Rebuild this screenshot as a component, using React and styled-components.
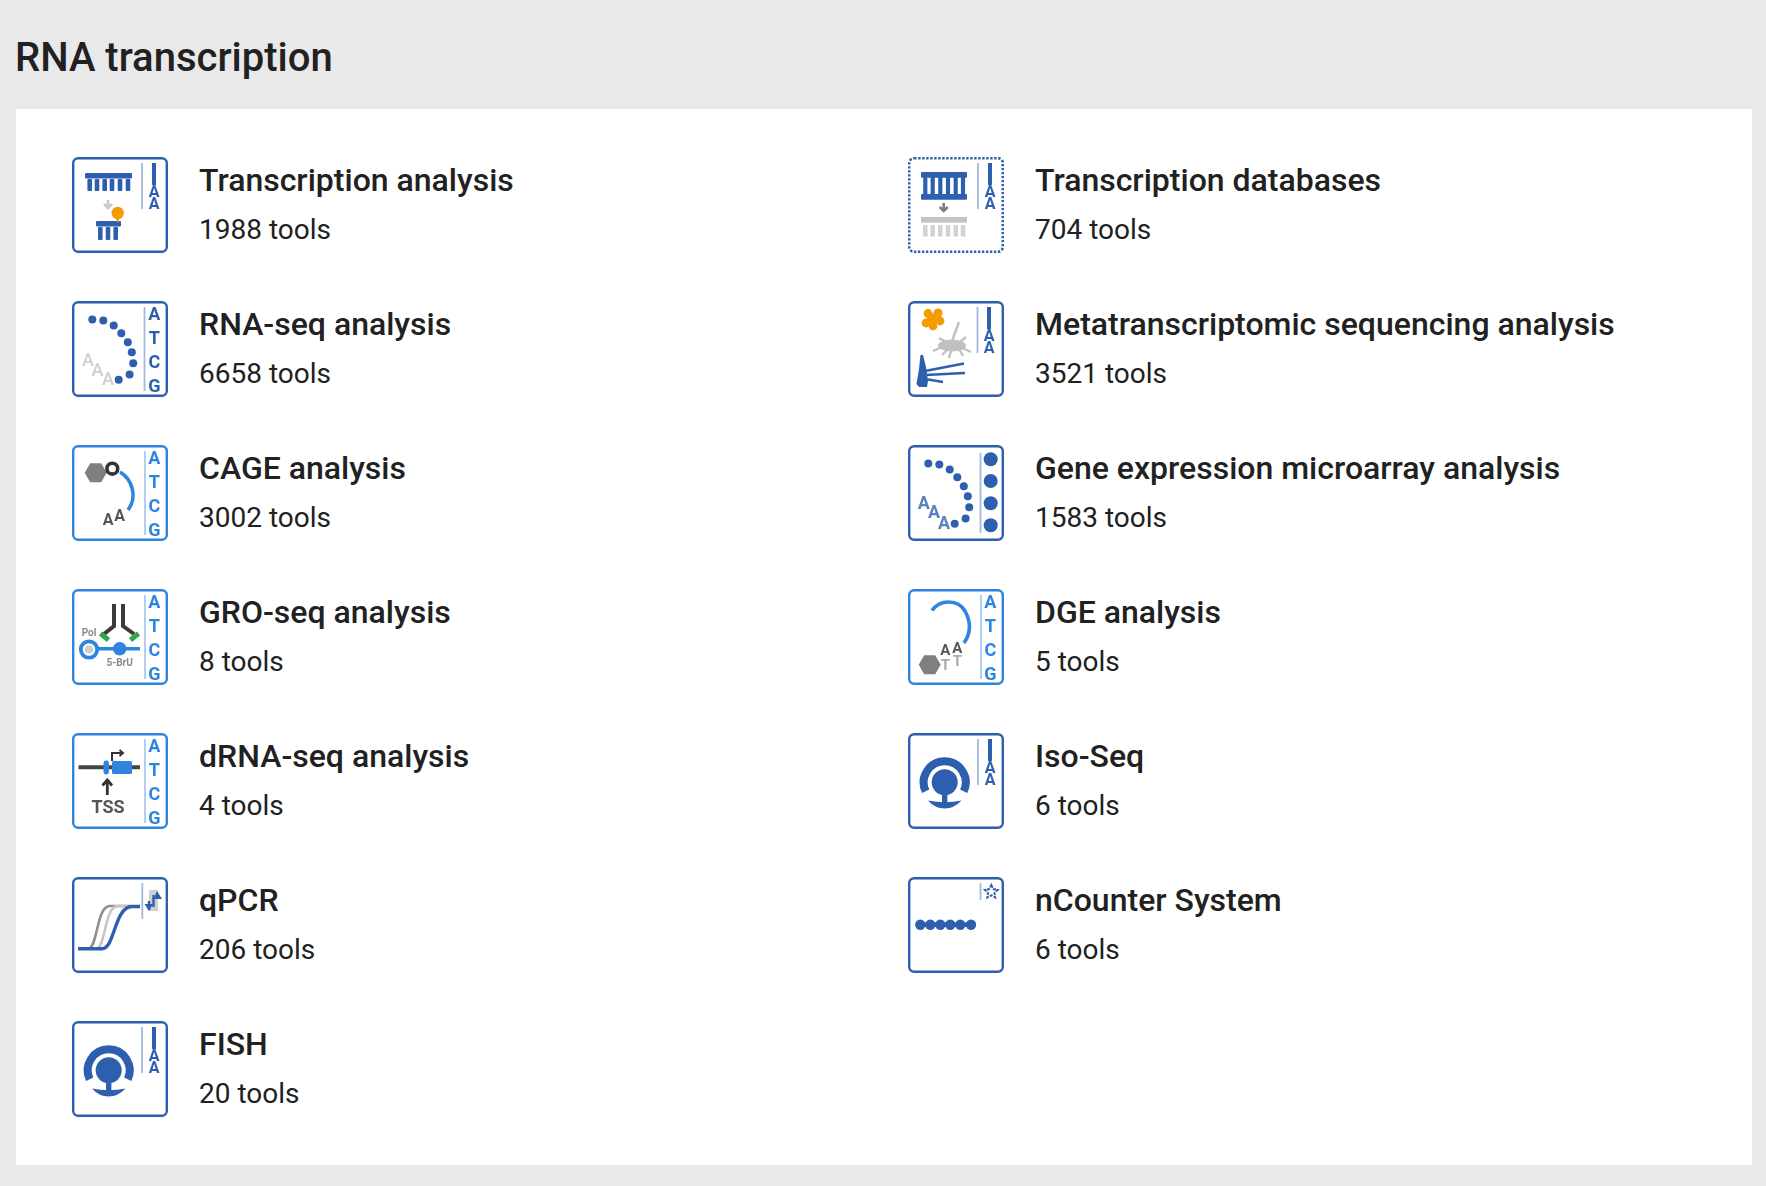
import React from "react"
import styled, { createGlobalStyle } from "styled-components"

const DARK = "#2e5fae"
const LIGHT = "#2f84de"
const DARK_SEP = "#a3b8dc"
const LIGHT_SEP = "#a5cbf3"

const GlobalStyle = createGlobalStyle`
  html, body {
    margin: 0;
    background: #e9e9e9;
  }
  body {
    font-family: Roboto, "Liberation Sans", sans-serif;
    color: #212121;
  }
`

const Letter = ({ x, y, size = 18, fill, weight = 700, children }) => (
  <text x={x} y={y} fontSize={size} fontWeight={weight} fill={fill} textAnchor="middle" fontFamily="Roboto, sans-serif">
    {children}
  </text>
)

// frame + side strip shared by every icon
const Frame = ({ color = DARK, dotted, children }) => (
  <IconSvg viewBox="0 0 96 96">
    <rect
      x="1.2"
      y="1.2"
      width="93.6"
      height="93.6"
      rx="5"
      fill="#fff"
      stroke={color}
      strokeWidth={dotted ? 2.6 : 2.4}
      strokeDasharray={dotted ? "2.4 1.6" : undefined}
    />
    {children}
  </IconSvg>
)

const Atcg = ({ x = 73, color = LIGHT, sep = LIGHT_SEP }) => (
  <>
    <line x1={x} y1="6" x2={x} y2="90" stroke={sep} strokeWidth="1.8" />
    {["A", "T", "C", "G"].map((l, i) => (
      <Letter key={l} x="82.4" y={18.5 + i * 24.2} fill={color}>
        {l}
      </Letter>
    ))}
  </>
)

const PolyA = ({ x = 70, strip = 82 }) => (
  <>
    <line x1={x} y1="6" x2={x} y2="52" stroke={DARK_SEP} strokeWidth="1.8" />
    <line x1={strip} y1="6" x2={strip} y2="28" stroke={DARK} strokeWidth="4" />
    <Letter x={strip} y="39.5" size={16} fill={DARK}>A</Letter>
    <Letter x={strip} y="52" size={16} fill={DARK}>A</Letter>
  </>
)

const Comb = ({ xs, y, h, w = 4.6, color = DARK }) =>
  xs.map((x) => <rect key={x} x={x - w / 2} y={y} width={w} height={h} rx="1" fill={color} />)

const DotArc = () =>
  [
    [20.3, 18.5],
    [31.3, 19.5],
    [41.7, 24.5],
    [49.3, 32.2],
    [55.8, 41.2],
    [59.8, 51.2],
    [61.2, 62.2],
    [57.6, 73.5],
    [46.7, 78.7],
  ].map(([cx, cy]) => <circle key={cx} cx={cx} cy={cy} r="4" fill={DARK} />)

const Hexagon = ({ cx, cy, r = 11 }) => {
  const pts = [0, 60, 120, 180, 240, 300]
    .map((a) => {
      const t = (a * Math.PI) / 180
      return `${cx + r * Math.cos(t)},${cy + r * Math.sin(t)}`
    })
    .join(" ")
  return <polygon points={pts} fill="#7f7f7f" />
}

const ArrowDown = ({ x, y1, y2, color }) => (
  <g stroke={color} fill="none" strokeWidth="2.6">
    <line x1={x} y1={y1} x2={x} y2={y2} />
    <path d={`M${x - 4} ${y2 - 4} L${x} ${y2} L${x + 4} ${y2 - 4}`} />
  </g>
)

const TranscriptionIcon = () => (
  <Frame>
    <rect x="13" y="16" width="47" height="5.6" rx="1" fill={DARK} />
    <Comb xs={[17.7, 25, 32.7, 40, 48, 56]} y={22} h={12} />
    <ArrowDown x={36} y1={43} y2={51} color="#c8c8c8" />
    <rect x="24" y="64" width="25" height="5.4" rx="1" fill={DARK} />
    <Comb xs={[28.3, 36, 43.7]} y={70} h={13} />
    <circle cx="45.7" cy="56" r="6.2" fill="#f39c00" />
    <line x1="45.7" y1="58" x2="45.7" y2="65" stroke="#f39c00" strokeWidth="2.4" />
    <PolyA />
  </Frame>
)

const DatabasesIcon = () => (
  <Frame dotted>
    <rect x="13" y="15" width="46" height="5.8" rx="1" fill={DARK} />
    <Comb xs={[17.3, 24.7, 32.3, 40, 47.7, 55]} y={20} h={18} w={4.2} />
    <rect x="13" y="37" width="46" height="5.8" rx="1" fill={DARK} />
    <ArrowDown x={35.7} y1={46} y2={54} color="#7d7d7d" />
    <rect x="13" y="60" width="46" height="5.6" fill="#c4c4c4" />
    <Comb xs={[17.3, 24.7, 32.3, 40, 47.7, 55]} y={68} h={11.5} color="#d2d2d2" />
    <PolyA />
  </Frame>
)

const RnaSeqIcon = () => (
  <Frame>
    <DotArc />
    <Letter x="16" y="64.5" size={18} weight={500} fill="#cfcfcf">A</Letter>
    <Letter x="25.5" y="75" size={18} weight={500} fill="#cfcfcf">A</Letter>
    <Letter x="36" y="83.5" size={18} weight={500} fill="#cfcfcf">A</Letter>
    <Atcg x={72.5} color={DARK} sep={DARK_SEP} />
  </Frame>
)

const MetaIcon = () => (
  <Frame>
    <g fill="#f39c00">
      <circle cx="20" cy="12.5" r="4.4" />
      <circle cx="30" cy="12" r="4.6" />
      <circle cx="32" cy="20" r="4.4" />
      <circle cx="18" cy="22" r="4.4" />
      <circle cx="25" cy="25" r="4.4" />
      <circle cx="24" cy="18" r="5.4" />
    </g>
    <g stroke="#c0c0c0" strokeWidth="2.4" fill="none">
      <path d="M51 21 L44 40" />
      <path d="M25 50 L36 45 M31 37 L40 42 M34 54 L40 48 M41 57 L43 50 M55 55 L51 48 M63 51 L52 46 M58 36 L52 41" />
    </g>
    <ellipse cx="44" cy="44.5" rx="14" ry="6" fill="#c0c0c0" />
    <path d="M12.5 54 L15 54 L18 66 L20 80 L19 86 L11 86 L8.5 83 L11 68 Z" fill={DARK} />
    <path d="M17 70 L56 62.5 M17 74 L57 72 M17 78 L35 81" stroke={DARK} strokeWidth="2.6" fill="none" />
    <PolyA x={69.5} strip={81} />
  </Frame>
)

const CageIcon = () => (
  <Frame color={LIGHT}>
    <Hexagon cx={23.7} cy={27.7} />
    <circle cx="40.3" cy="23.7" r="5.4" fill="#fff" stroke="#333" strokeWidth="3.6" />
    <path d="M48 27 C60 34 66 52 56 65" fill="none" stroke={LIGHT} strokeWidth="3.6" />
    <Letter x="36" y="80" size={16} weight={700} fill="#555">A</Letter>
    <Letter x="47.5" y="76" size={16} weight={700} fill="#555">A</Letter>
    <Atcg />
  </Frame>
)

const MicroarrayIcon = () => (
  <Frame>
    <DotArc />
    <Letter x="15.7" y="64" size={18} weight={700} fill="#5a80bf">A</Letter>
    <Letter x="26" y="73" size={18} weight={700} fill="#5a80bf">A</Letter>
    <Letter x="36" y="84" size={18} weight={700} fill="#5a80bf">A</Letter>
    <line x1="72.5" y1="8" x2="72.5" y2="88" stroke={DARK_SEP} strokeWidth="1.8" />
    {[14.3, 36, 58.3, 80.3].map((cy) => (
      <circle key={cy} cx="82.7" cy={cy} r="7" fill={DARK} />
    ))}
  </Frame>
)

const GroSeqIcon = () => (
  <Frame color={LIGHT}>
    <path d="M42 15 V37 L32 45 M51 15 V37 L62 45" fill="none" stroke="#3a3a3a" strokeWidth="4" />
    <path d="M28.5 44.5 L36.5 51 M58.5 51 L66.5 44.5" stroke="#2aa84a" strokeWidth="5" fill="none" />
    <Letter x="17" y="47" size={10} weight={700} fill="#888">Pol</Letter>
    <circle cx="17" cy="60.5" r="8.2" fill="#fff" stroke={LIGHT} strokeWidth="3.8" />
    <circle cx="17" cy="60.5" r="4" fill="#cfcfcf" />
    <line x1="26" y1="59.7" x2="68" y2="59.7" stroke={LIGHT} strokeWidth="3.4" />
    <circle cx="47.7" cy="59.7" r="6.8" fill={LIGHT} />
    <Letter x="47.7" y="77" size={10} weight={700} fill="#888">5-BrU</Letter>
    <Atcg />
  </Frame>
)

const DgeIcon = () => (
  <Frame color={LIGHT}>
    <path d="M24 21.5 C32 10 50 10 57 22 C63 33 63 44 56 54" fill="none" stroke={LIGHT} strokeWidth="3.6" />
    <Hexagon cx={21.7} cy={75.7} />
    <Letter x="37.3" y="66" size={15} fill="#555">A</Letter>
    <Letter x="49.3" y="64" size={15} fill="#555">A</Letter>
    <Letter x="37.3" y="81" size={15} fill="#aaa">T</Letter>
    <Letter x="49.3" y="77" size={15} fill="#aaa">T</Letter>
    <Atcg />
  </Frame>
)

const DrnaIcon = () => (
  <Frame color={LIGHT}>
    <line x1="6.5" y1="34.3" x2="68" y2="34.3" stroke="#444" strokeWidth="4" />
    <rect x="31.5" y="27.5" width="5.4" height="14" rx="2.4" fill={LIGHT} />
    <rect x="40" y="28" width="20" height="13" rx="1.5" fill={LIGHT} />
    <path d="M40 28 V20 H50 M47.5 17 L51 20 L47.5 23" fill="none" stroke="#333" strokeWidth="2" />
    <path d="M35.3 62 V48 M30.5 52.5 L35.3 47 L40 52.5" fill="none" stroke="#333" strokeWidth="2.8" />
    <Letter x="36" y="79.5" size={18} weight={700} fill="#555">TSS</Letter>
    <Atcg />
  </Frame>
)

const QpcrIcon = () => (
  <Frame>
    <path d="M10 71.7 H16 C26 71.7 24 29 38 29 H58" fill="none" stroke="#8f8f8f" strokeWidth="2.6" />
    <path d="M18 71.7 H24 C34 71.7 32 29 46 29 H60" fill="none" stroke="#c6c6c6" strokeWidth="2.6" />
    <rect x="77" y="13" width="9" height="21" fill="#cfcfcf" />
    <path d="M6 71.7 H30 C43 71.7 42 30 60 29.5 H68" fill="none" stroke={DARK} strokeWidth="3.4" />
    <line x1="70.3" y1="6" x2="70.3" y2="42" stroke={DARK_SEP} strokeWidth="1.8" />
    <path d="M77 24 V33 M81.5 30 V18" fill="none" stroke={DARK} strokeWidth="2.4" />
    <path d="M72.5 27 H81 L77 34 Z" fill={DARK} />
    <path d="M81 12 L86 20 H77.5 Z" fill={DARK} transform="translate(4 2)" />
  </Frame>
)

const BeaconIcon = () => (
  <Frame>
    <path d="M17.7 58.3 A21 21 0 1 1 55.7 58.3" fill="none" stroke={DARK} strokeWidth="8" />
    <circle cx="36.7" cy="49.3" r="13" fill={DARK} />
    <rect x="34" y="58" width="5.4" height="12" fill={DARK} />
    <path d="M20 67.5 Q36.7 71 53.5 67.5 Q46 75.5 36.7 75.5 Q27 75.5 20 67.5 Z" fill={DARK} />
    <PolyA />
  </Frame>
)

const NCounterIcon = () => (
  <Frame>
    <line x1="12" y1="47.7" x2="63" y2="47.7" stroke={DARK} strokeWidth="4.4" />
    {[12.3, 22.3, 32.3, 42.3, 52.3, 63].map((cx) => (
      <circle key={cx} cx={cx} cy="47.7" r="5.2" fill={DARK} />
    ))}
    <line x1="72.5" y1="6" x2="72.5" y2="23" stroke={DARK_SEP} strokeWidth="1.8" />
    <path
      d="M83.3 8 L85.3 12 L89.7 12.8 L86.5 16 L87.2 20.4 L83.3 18.3 L79.4 20.4 L80.1 16 L76.9 12.8 L81.3 12 Z"
      fill="#fff"
      stroke={DARK}
      strokeWidth="2"
      strokeDasharray="3 1.2"
    />
  </Frame>
)

const COLUMNS = [
  [
    { title: "Transcription analysis", count: 1988, Icon: TranscriptionIcon },
    { title: "RNA-seq analysis", count: 6658, Icon: RnaSeqIcon },
    { title: "CAGE analysis", count: 3002, Icon: CageIcon },
    { title: "GRO-seq analysis", count: 8, Icon: GroSeqIcon },
    { title: "dRNA-seq analysis", count: 4, Icon: DrnaIcon },
    { title: "qPCR", count: 206, Icon: QpcrIcon },
    { title: "FISH", count: 20, Icon: BeaconIcon },
  ],
  [
    { title: "Transcription databases", count: 704, Icon: DatabasesIcon },
    { title: "Metatranscriptomic sequencing analysis", count: 3521, Icon: MetaIcon },
    { title: "Gene expression microarray analysis", count: 1583, Icon: MicroarrayIcon },
    { title: "DGE analysis", count: 5, Icon: DgeIcon },
    { title: "Iso-Seq", count: 6, Icon: BeaconIcon },
    { title: "nCounter System", count: 6, Icon: NCounterIcon },
  ],
]

const App = () => (
  <Page>
    <GlobalStyle />
    <Heading>RNA transcription</Heading>
    <Card>
      {COLUMNS.map((items, i) => (
        <Column key={i}>
          {items.map(({ title, count, Icon }) => (
            <Item key={title}>
              <Icon />
              <ItemText>
                <ItemTitle>{title}</ItemTitle>
                <ItemCount>{count} tools</ItemCount>
              </ItemText>
            </Item>
          ))}
        </Column>
      ))}
    </Card>
  </Page>
)

export default App

const Page = styled.div`
  padding: 0 14px 21px 16px;
  min-height: 1186px;
  box-sizing: border-box;
`

const Heading = styled.h1`
  margin: 0 0 0 -1px;
  height: 109px;
  line-height: 115px;
  font-size: 40px;
  font-weight: 500;
  color: #212121;
`

const Card = styled.div`
  display: grid;
  grid-template-columns: 1fr 1fr;
  background: #fff;
  padding: 48px 32px;
  height: 1056px;
  box-sizing: border-box;
`

const Column = styled.div`
  display: flex;
  flex-direction: column;
  gap: 48px;
  padding: 0 24px;
`

const Item = styled.div`
  display: flex;
  gap: 31px;
  height: 96px;
`

const IconSvg = styled.svg`
  width: 96px;
  height: 96px;
  flex: none;
  filter: blur(0.55px);
`

const ItemText = styled.div`
  display: flex;
  flex-direction: column;
`

const ItemTitle = styled.div`
  font-size: 32px;
  font-weight: 500;
  line-height: 46px;
  color: #212121;
`

const ItemCount = styled.div`
  font-size: 28px;
  font-weight: 400;
  line-height: 50px;
  margin-top: 2px;
  color: #212121;
`
